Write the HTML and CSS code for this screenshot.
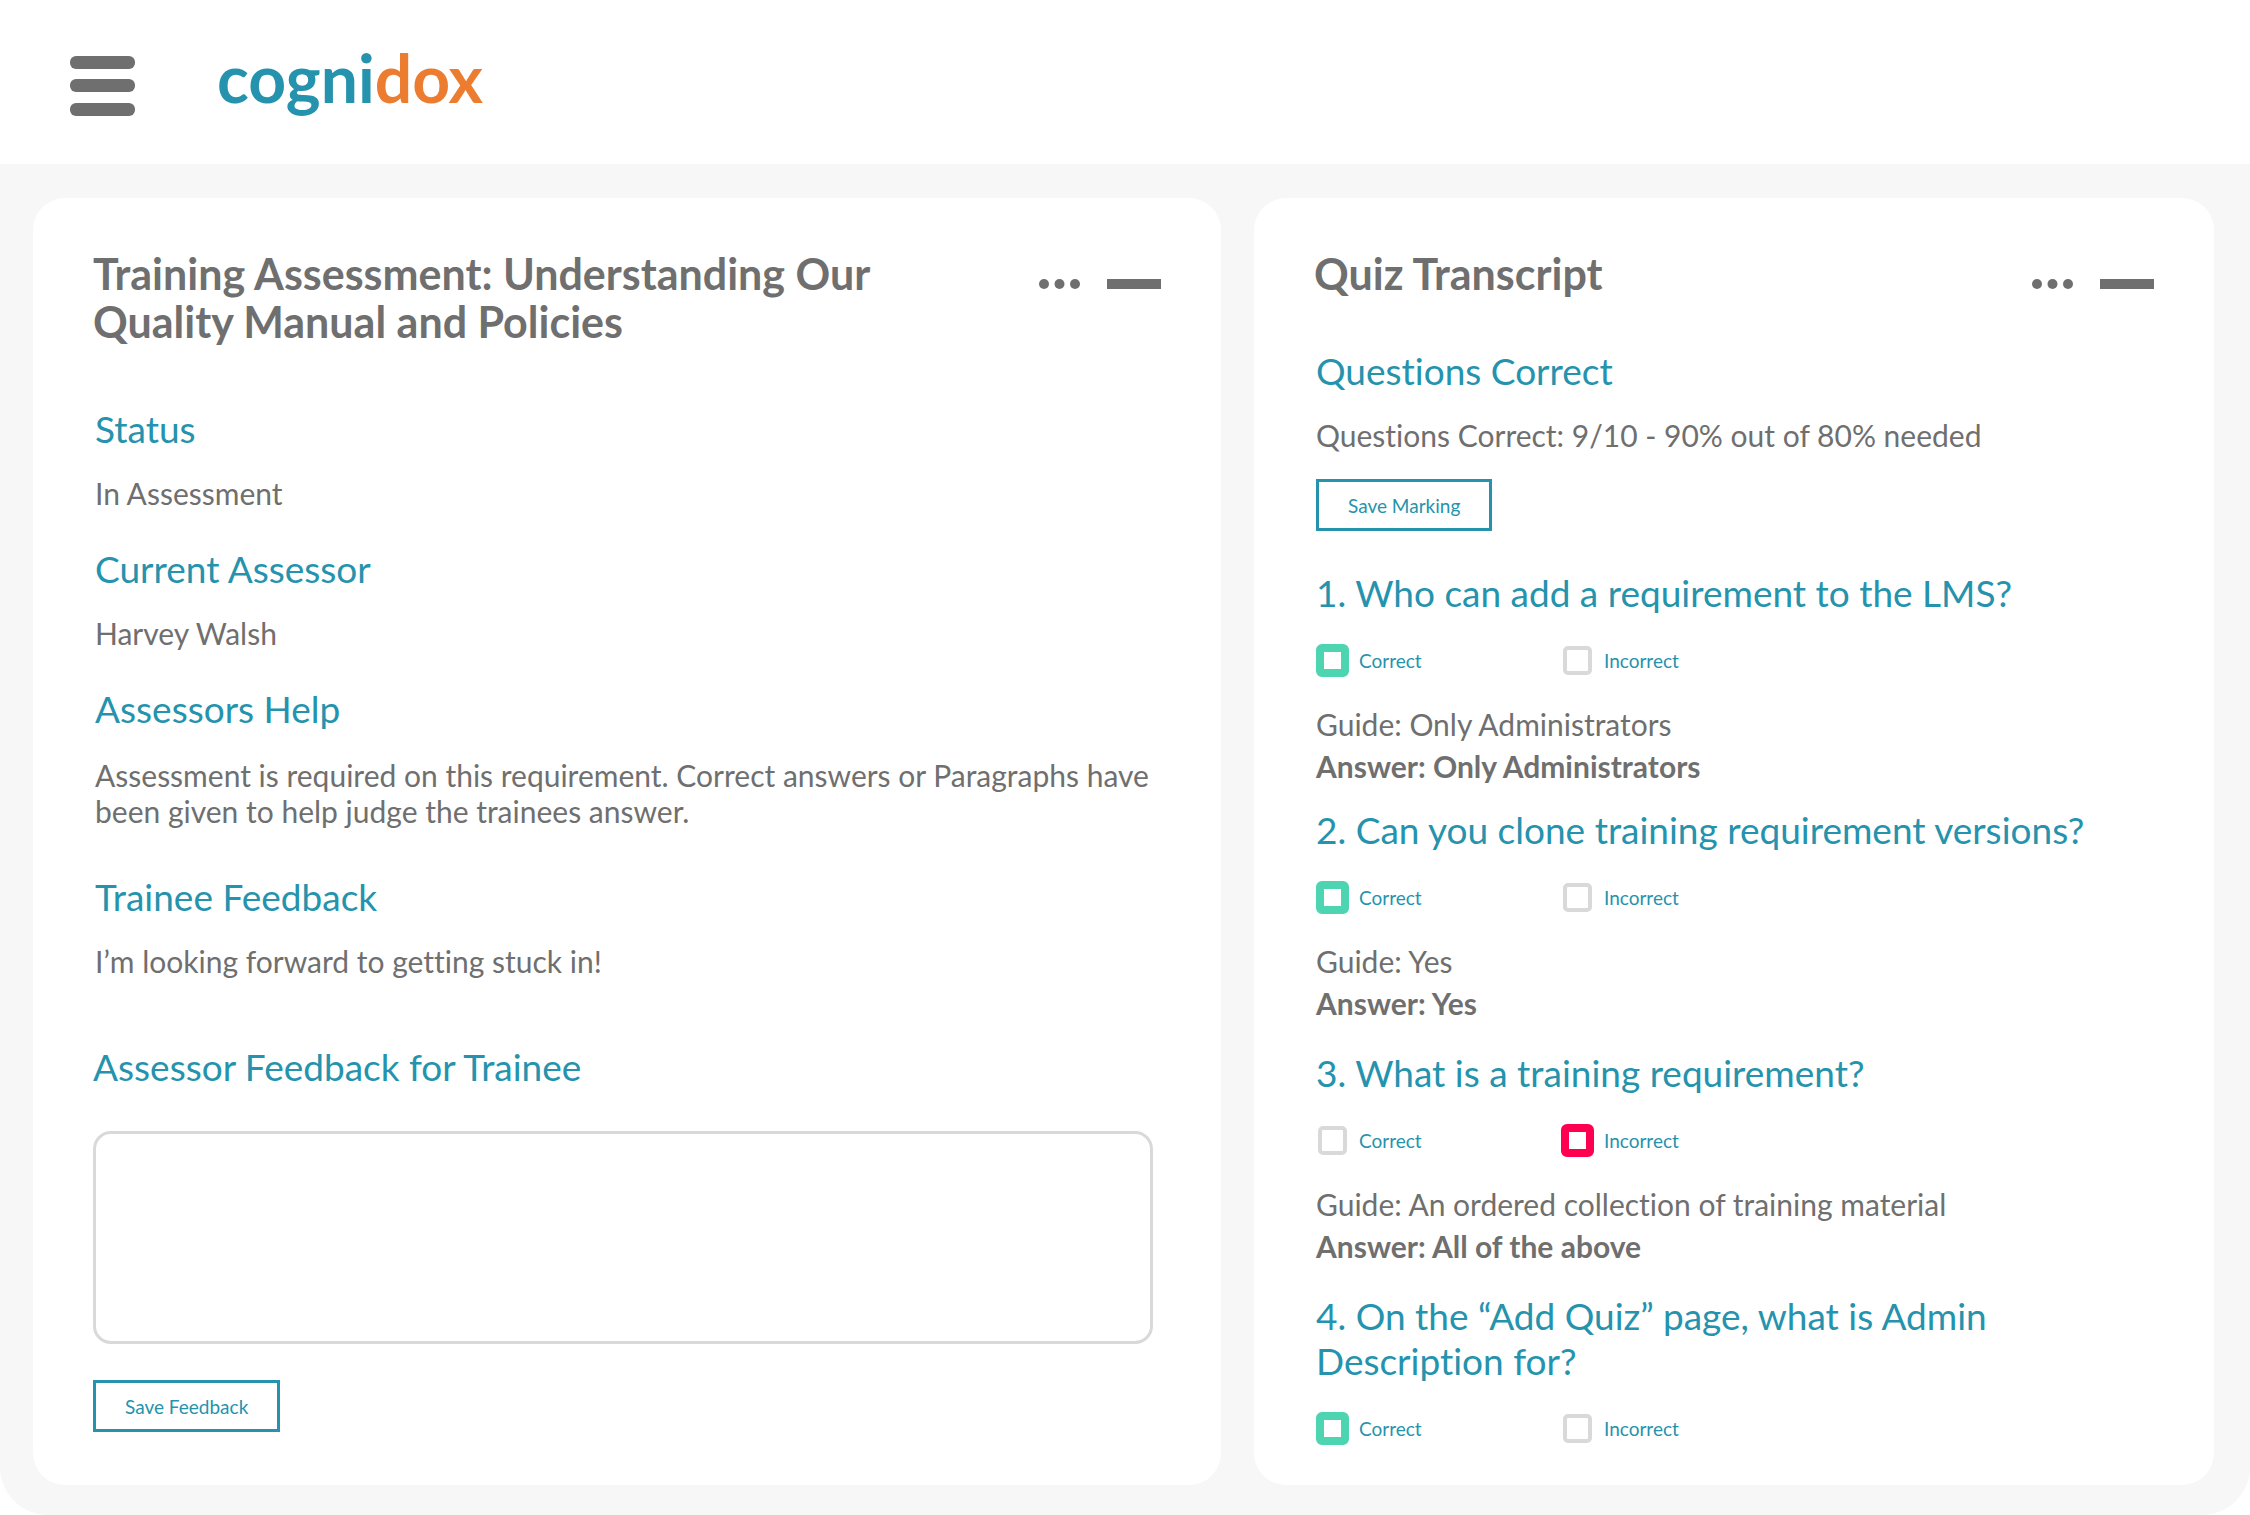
FILE: index.html
```html
<!DOCTYPE html>
<html lang="en">

<head>
    <meta charset="UTF-8">
    <meta name="viewport" content="width=device-width, initial-scale=1.0">
    <title>Training Assessment - Cognidox</title>
    <link rel="stylesheet" href="styles.css">
</head>

<body>
    <header class="top-bar">
        <button type="button" class="icon-button" aria-label="Menu">
            <svg width="65" height="60" viewBox="0 0 65 60" fill="#6f6f6f">
                <rect width="65" height="13" rx="6" />
                <rect y="23" width="65" height="13" rx="6" />
                <rect y="47" width="65" height="13" rx="6" />
            </svg>
        </button>
        <a href="#" class="logo">cogni<span class="logo-accent">dox</span></a>
    </header>

    <main class="board">
        <!-- Assessment details -->
        <section class="panel">
            <div class="panel-header">
                <h1>Training Assessment: Understanding Our Quality Manual and Policies</h1>
                <div class="panel-actions">
                    <button type="button" class="icon-button" aria-label="More options">
                        <svg width="41" height="10" viewBox="0 0 41 10" fill="#6f6f6f">
                            <circle cx="5" cy="5" r="5" />
                            <circle cx="20.5" cy="5" r="5" />
                            <circle cx="36" cy="5" r="5" />
                        </svg>
                    </button>
                    <button type="button" class="icon-button" aria-label="Minimise">
                        <svg width="54" height="10" viewBox="0 0 54 10" fill="#6f6f6f">
                            <rect width="54" height="10" />
                        </svg>
                    </button>
                </div>
            </div>

            <div class="details">
                <div class="detail">
                    <h2>Status</h2>
                    <p>In Assessment</p>
                </div>
                <div class="detail">
                    <h2>Current Assessor</h2>
                    <p>Harvey Walsh</p>
                </div>
                <div class="detail detail-help">
                    <h2>Assessors Help</h2>
                    <p>Assessment is required on this requirement. Correct answers or Paragraphs have been given to help judge the trainees answer.</p>
                </div>
                <div class="detail">
                    <h2>Trainee Feedback</h2>
                    <p>I’m looking forward to getting stuck in!</p>
                </div>
            </div>

            <form class="feedback">
                <h2><label for="feedback">Assessor Feedback for Trainee</label></h2>
                <textarea id="feedback" name="feedback"></textarea>
                <button type="button" class="button">Save Feedback</button>
            </form>
        </section>

        <!-- Quiz answers with marking -->
        <section class="panel">
            <div class="panel-header">
                <h1>Quiz Transcript</h1>
                <div class="panel-actions">
                    <button type="button" class="icon-button" aria-label="More options">
                        <svg width="41" height="10" viewBox="0 0 41 10" fill="#6f6f6f">
                            <circle cx="5" cy="5" r="5" />
                            <circle cx="20.5" cy="5" r="5" />
                            <circle cx="36" cy="5" r="5" />
                        </svg>
                    </button>
                    <button type="button" class="icon-button" aria-label="Minimise">
                        <svg width="54" height="10" viewBox="0 0 54 10" fill="#6f6f6f">
                            <rect width="54" height="10" />
                        </svg>
                    </button>
                </div>
            </div>

            <form class="quiz">
                <div class="score">
                    <h2>Questions Correct</h2>
                    <p>Questions Correct: 9/10 - 90% out of 80% needed</p>
                    <button type="button" class="button">Save Marking</button>
                </div>

                <div class="question question-first">
                    <h2>1. Who can add a requirement to the LMS?</h2>
                    <div class="marks">
                        <label class="mark"><input type="checkbox" class="correct" checked>Correct</label>
                        <label class="mark"><input type="checkbox" class="incorrect">Incorrect</label>
                    </div>
                    <p>Guide: Only Administrators</p>
                    <p class="answer">Answer: Only Administrators</p>
                </div>

                <div class="question">
                    <h2>2. Can you clone training requirement versions?</h2>
                    <div class="marks">
                        <label class="mark"><input type="checkbox" class="correct" checked>Correct</label>
                        <label class="mark"><input type="checkbox" class="incorrect">Incorrect</label>
                    </div>
                    <p>Guide: Yes</p>
                    <p class="answer">Answer: Yes</p>
                </div>

                <div class="question">
                    <h2>3. What is a training requirement?</h2>
                    <div class="marks">
                        <label class="mark"><input type="checkbox" class="correct">Correct</label>
                        <label class="mark"><input type="checkbox" class="incorrect" checked>Incorrect</label>
                    </div>
                    <p>Guide: An ordered collection of training material</p>
                    <p class="answer">Answer: All of the above</p>
                </div>

                <div class="question">
                    <h2>4. On the “Add Quiz” page, what is Admin Description for?</h2>
                    <div class="marks">
                        <label class="mark"><input type="checkbox" class="correct" checked>Correct</label>
                        <label class="mark"><input type="checkbox" class="incorrect">Incorrect</label>
                    </div>
                </div>
            </form>
        </section>
    </main>
</body>

</html>
```

FILE: styles.css
```css
/* Global styles */

* {
    box-sizing: border-box;
}

body {
    margin: 0;
    min-height: 100vh;
    display: flex;
    flex-direction: column;
    font-family: Lato, sans-serif;
    font-size: 30px;
    line-height: 36px;
    font-variant-ligatures: none;
    color: #6f6f6f;
    background-color: #fff;
}

h1,
h2,
p {
    margin: 0;
}

h1 {
    font-size: 43px;
    line-height: 48px;
    font-weight: bold;
}

h2 {
    font-size: 37px;
    line-height: 45px;
    font-weight: normal;
    color: #2593ad;
}

/* Top bar */

.top-bar {
    display: flex;
    align-items: center;
    gap: 82px;
    height: 164px;
    padding: 8px 70px 0;
}

.logo {
    padding-bottom: 16px;
    font-size: 66px;
    line-height: 78px;
    font-weight: bold;
    color: #2593ad;
    text-decoration: none;
}

.logo-accent {
    color: #ec7c30;
}

.icon-button {
    display: block;
    padding: 0;
    border: 0;
    background: none;
    cursor: pointer;
}

.icon-button svg {
    display: block;
}

/* Panels */

.board {
    flex: 1;
    display: grid;
    grid-template-columns: 99fr 80fr;
    gap: 33px;
    padding: 34px 36px 30px 33px;
    background-color: #f7f7f7;
    border-radius: 0 0 48px 48px;
}

.panel {
    padding: 52px 60px 36px;
    background-color: #fff;
    border-radius: 32px;
}

.panel-header {
    display: flex;
    justify-content: space-between;
    align-items: flex-start;
    gap: 120px;
}

.panel-actions {
    display: flex;
    gap: 27px;
    padding-top: 29px;
}

/* Assessment details */

.details {
    display: flex;
    flex-direction: column;
    gap: 35px;
    padding: 60px 8px 0 2px;
}

.detail {
    display: flex;
    flex-direction: column;
    gap: 24px;
}

.detail-help {
    gap: 26px;
    padding-bottom: 10px;
}

.feedback {
    display: flex;
    flex-direction: column;
    align-items: flex-start;
    padding: 65px 8px 0 0;
}

.feedback textarea {
    width: 100%;
    height: 213px;
    margin: 42px 0 36px;
    padding: 16px;
    font: inherit;
    color: inherit;
    border: 3px solid #d9d9d9;
    border-radius: 18px;
    resize: none;
}

.button {
    height: 52px;
    padding: 0 29px;
    font-family: inherit;
    font-size: 19px;
    color: #2593ad;
    background-color: #fff;
    border: 3px solid #2593ad;
    cursor: pointer;
}

/* Quiz transcript */

.quiz {
    padding: 50px 60px 0 2px;
}

.score {
    margin-bottom: 39px;
}

.score p {
    margin: 24px 0 26px;
}

.question {
    margin-bottom: 26px;
}

.question-first {
    margin-bottom: 20px;
}

.question p {
    line-height: 42px;
}

.answer {
    font-weight: bold;
}

.marks {
    display: grid;
    grid-template-columns: 245px 245px;
    margin: 29px 0 26px;
}

.question:last-child,
.question:last-child .marks {
    margin-bottom: 0;
}

.mark {
    display: flex;
    align-items: center;
    gap: 10px;
    height: 33px;
    font-size: 19px;
    color: #2593ad;
}

.mark input {
    appearance: none;
    width: 29px;
    height: 29px;
    margin: 2px;
    background-color: #fff;
    border: 4px solid #d9d9d9;
    border-radius: 5px;
}

.mark input:checked {
    width: 33px;
    height: 33px;
    margin: 0;
    border-width: 8px;
    border-radius: 6px;
}

.mark .correct:checked {
    border-color: #4dd4b0;
}

.mark .incorrect:checked {
    border-color: #ff0050;
}
```
